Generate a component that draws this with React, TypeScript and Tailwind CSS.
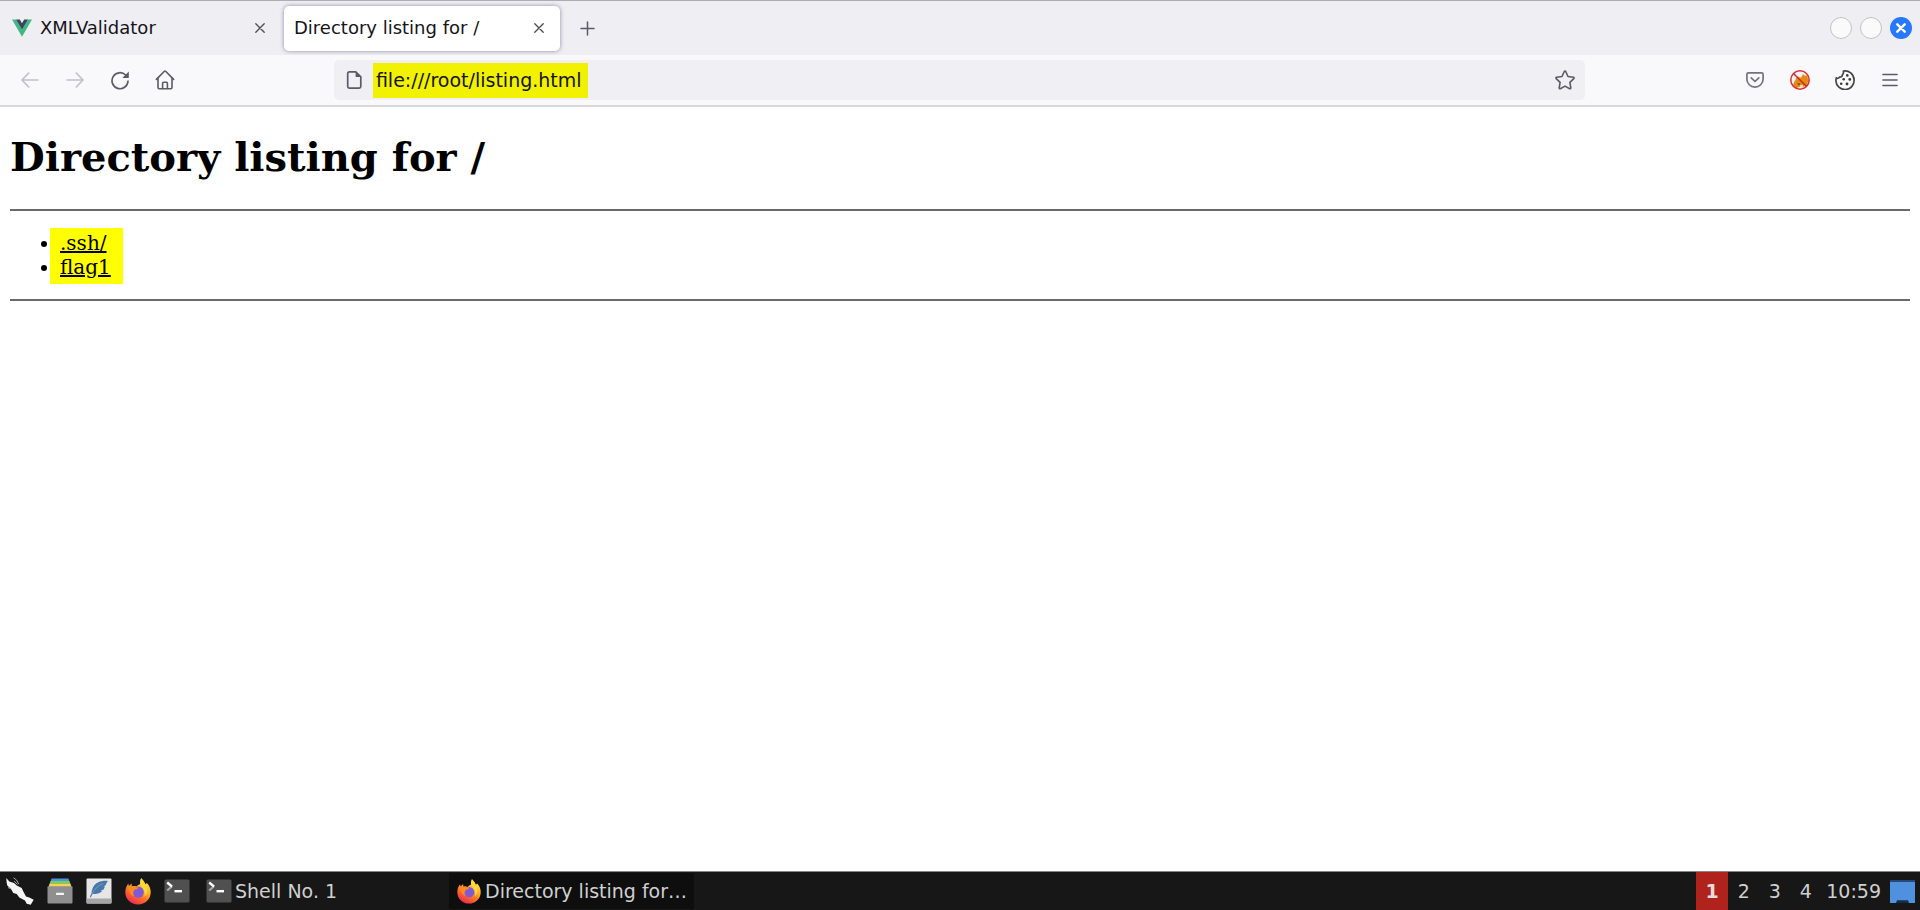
import React, { FC, ReactNode } from "react";

type IconProps = { className?: string };

const VueLogo: FC = () => (
  <svg viewBox="0 0 20 18" className="w-5 h-[18px] shrink-0">
    <path d="M0 0.5h4l6 10.2 6-10.2h4L10 17.8z" fill="#41b883" />
    <path d="M4 0.5h3.8L10 4.2l2.2-3.7H16L10 10.8z" fill="#35495e" />
  </svg>
);

const CloseIcon: FC = () => (
  <svg viewBox="0 0 10 10" className="w-[10px] h-[10px]" stroke="#4a4a52" strokeWidth="1.3" strokeLinecap="round">
    <path d="M0.8 0.8l8.4 8.4M9.2 0.8L0.8 9.2" />
  </svg>
);

const ArrowIcon: FC<IconProps> = ({ className }) => (
  <svg
    viewBox="0 0 18 16"
    className={className}
    fill="none"
    stroke="#bfbfc5"
    strokeWidth="1.6"
    strokeLinecap="round"
    strokeLinejoin="round"
  >
    <path d="M17 8H1M7.7 1L1 8l6.7 7" />
  </svg>
);

const ReloadIcon: FC = () => (
  <svg viewBox="0 0 20 20" className="w-5 h-5" fill="none" stroke="#5b5b66" strokeWidth="1.7" strokeLinecap="round">
    <path d="M18 11.2A8 8 0 1 1 15.6 5" />
    <path d="M18.8 1.4v6.2a.5.5 0 0 1-.5.5h-6z" fill="#5b5b66" stroke="none" />
  </svg>
);

const HomeIcon: FC = () => (
  <svg
    viewBox="0 0 20 20"
    className="w-5 h-5"
    fill="none"
    stroke="#5b5b66"
    strokeWidth="1.6"
    strokeLinecap="round"
    strokeLinejoin="round"
  >
    <path d="M1.4 9.4L9.4 1.3a.9.9 0 0 1 1.2 0l8 8.1" />
    <path d="M3 8v9.6a1.2 1.2 0 0 0 1.2 1.2h11.6a1.2 1.2 0 0 0 1.2-1.2V8" />
    <path d="M7.6 18.5v-5.3a1 1 0 0 1 1-1h2.8a1 1 0 0 1 1 1v5.3" />
  </svg>
);

const PageIcon: FC = () => (
  <svg viewBox="0 0 16 18" className="w-4 h-[18px]" fill="none" stroke="#5b5b66" strokeWidth="1.7" strokeLinejoin="round">
    <path d="M3.3 0.9h6.5l5 5v9.6a1.6 1.6 0 0 1-1.6 1.6H3.3a1.6 1.6 0 0 1-1.6-1.6v-13a1.6 1.6 0 0 1 1.6-1.6z" />
    <path d="M9.6 0.8v4.6a.7.7 0 0 0 .7.7h4.6z" fill="#5b5b66" stroke="none" />
  </svg>
);

const StarIcon: FC = () => (
  <svg viewBox="0 0 20 20" className="w-5 h-5" fill="none" stroke="#5b5b66" strokeWidth="1.6" strokeLinejoin="round">
    <path d="M9.3 1.5a.8.8 0 0 1 1.4 0l2.3 5 5.4.8c.7.1.9.9.4 1.3l-3.9 3.8.9 5.5c.1.7-.5 1.1-1.1.8L10 16.1l-4.7 2.6c-.6.3-1.2-.1-1.1-.8l.9-5.5-3.9-3.8c-.5-.4-.3-1.2.4-1.3l5.4-.8z" />
  </svg>
);

const PocketIcon: FC = () => (
  <svg
    viewBox="0 0 18 16"
    className="w-[18px] h-4"
    fill="none"
    stroke="#73737d"
    strokeWidth="1.7"
    strokeLinecap="round"
    strokeLinejoin="round"
  >
    <path d="M2.4 0.9h13.2a1.5 1.5 0 0 1 1.5 1.5V7A8.1 8.1 0 0 1 0.9 7V2.4a1.5 1.5 0 0 1 1.5-1.5z" />
    <path d="M5.2 5.8L9 9.5l3.8-3.7" />
  </svg>
);

// fox with a prohibition ring, proxy switcher in its off state
const FoxyIcon: FC = () => (
  <svg viewBox="0 0 20 20" className="w-5 h-5">
    <circle cx="10" cy="10" r="9.2" fill="#f4f1ef" />
    <path
      d="M3 16.2c.4-2 .8-4.400 2.400-6 .3-2 1.400-3.200 3-3.500l2.600 1 2-3.700 1.600 1.800 3-.4.2 3 1 2.200-1.400 2.400-.4 3-2.300-.2-1.600 1.800-2.600-1-2.500.9-2 .9z"
      fill="#e48a10"
    />
    <path d="M7.2 13.400l3.200.2-1.400 2z" fill="#5a4520" />
    <path d="M9.500 15.500l3-.8 1 1.800-2.500.8z" fill="#f4e3c8" />
    <circle cx="10" cy="10" r="9.2" fill="none" stroke="#dd2f2f" strokeWidth="1.5" />
    <path d="M3.5 3.5l13 13" stroke="#cc2424" strokeWidth="1.4" />
  </svg>
);

const CookieIcon: FC = () => (
  <svg viewBox="0 0 20 20" className="w-5 h-5">
    <path
      d="M8.4 1.100c5.300-1 10.600 3 10.700 8.900a9.100 9.100 0 0 1-18.200.9c0-1.200 0-2 .4-3 1 .8 2.500.5 3.100-.8 1.600.3 2.900-.7 2.900-2.200 1-.8 1.400-2.300 1.100-3.800z"
      fill="#fbfbfb"
      stroke="#454545"
      strokeWidth="1.700"
      strokeLinejoin="round"
    />
    <g fill="#3a3a3a">
      <circle cx="12.3" cy="5.400" r="1.300" />
      <circle cx="8.700" cy="9.300" r="1.300" />
      <circle cx="14.800" cy="9.400" r="1.400" />
      <circle cx="6.200" cy="13.700" r="1.300" />
      <circle cx="12" cy="14" r="1.400" />
    </g>
  </svg>
);

const MenuIcon: FC = () => (
  <svg viewBox="0 0 16 14" className="w-4 h-[14px]" stroke="#5b5b66" strokeWidth="1.6" strokeLinecap="round">
    <path d="M1 1.500h14M1 7h14M1 12.500h14" />
  </svg>
);

const KaliIcon: FC = () => (
  <svg viewBox="0 0 28 28" className="w-7 h-7">
    <path
      d="M0.300 1l3 3.400L8 6l2.700 2.500 5 2.500 1.600 3.400 2.700 5 3.300 1 4.400 2.400-3 5-4-1-1.700-3.200-5.700-3.200-2.600-3.400-3.400-1-2.300-4-3.700-3.600-.6-2.400z"
      fill="#f5f5f5"
    />
    <path d="M7.500 0.800l3 2.200 2.200 4M8.200 4.200l3.300 3.200M2 10.500l2.500 1.200" stroke="#a5a5a5" strokeWidth="1" fill="none" />
  </svg>
);

const FilesIcon: FC = () => (
  <svg viewBox="0 0 26 26" className="w-[26px] h-[26px]">
    <path d="M4.500 0.500h17l.8 2.800H3.700z" fill="#5294e2" />
    <path d="M3.500 3h19l.8 2.700H2.700z" fill="#6cd35f" />
    <path d="M2.500 5.500h21l1 3.500h-23z" fill="#f7cf5b" />
    <rect x="0.500" y="8.300" width="25" height="17.200" rx="1" fill="#8f8f8f" />
    <rect x="9" y="14.800" width="8" height="2.200" rx="0.500" fill="#f5f5f5" />
  </svg>
);

const FeatherIcon: FC = () => (
  <svg viewBox="0 0 26 26" className="w-[26px] h-[26px]">
    <rect x="0.500" y="0.500" width="25" height="25" rx="1" fill="#e6e6e6" />
    <path d="M0.500 20.500h25v4a1 1 0 0 1-1 1h-23a1 1 0 0 1-1-1z" fill="#a6a6a6" />
    <path
      d="M22 3c-6-.8-12 1.400-14.500 5.600-1.400 2.400-1.800 5-2 6.600L3.800 19l1 .4 1.800-3.600c3.600.6 7.400-.2 9.600-2.800l-1.600-.2 3-1.200 1.400-3-1.600-.1 2.200-1.300c.600-1.600 1.200-3 2.400-4.200z"
      fill="#4878a8"
    />
    <path d="M6.200 15.600C8.500 11 12 7.500 17 5.500" stroke="#86a9cc" strokeWidth="0.700" fill="none" />
  </svg>
);

const FirefoxIcon: FC<IconProps> = ({ className }) => (
  <svg viewBox="0 0 26 27" className={className}>
    <defs>
      <linearGradient id="flame" x1="0.800" y1="0.100" x2="0.300" y2="1">
        <stop offset="0" stopColor="#ffe340" />
        <stop offset="0.350" stopColor="#ffb02a" />
        <stop offset="0.650" stopColor="#ff6a26" />
        <stop offset="1" stopColor="#e8285a" />
      </linearGradient>
    </defs>
    <path
      d="M16.200 0.300c2.200 2 3.600 4 4.200 5.900l1.500-1.300c2.500 2.700 3.800 5.800 3.800 9.300 0 7-5.700 12.300-12.700 12.300S0.300 21.200 0.300 14.200c0-3.400 1.200-6.200 3-8.600l.5 2.500 3-2.600-.2 2.800c1.600-.4 3.200-.3 4.700.2 1.200-1.200 2.700-1.900 4-2.500-.4-2 .1-4 .900-5.700z"
      fill="url(#flame)"
    />
    <circle cx="13.200" cy="14.200" r="5.600" fill="#8059d6" />
    <path
      d="M3.500 8.200C6 7.600 9 8 11.500 9.200l1.800.2c-.3 1.500-1.800 2-3.300 2.200-.8.8-1.500 1.400-1.700 2.600-.2 1.700.2 3 1.200 4.200C5.800 17.500 3.200 13 3.500 8.200z"
      fill="#ff8b20"
    />
    <path d="M16.200 0.300c3 3 3.200 5.500 5.400 9 1.300 3.500.5 7-2.200 9.400.8-3 .5-6.500-2.200-9.500-2-2.400-2.800-5.200-1-8.900z" fill="#ffd83b" />
  </svg>
);

const TerminalIcon: FC = () => (
  <svg viewBox="0 0 26 24" className="w-[26px] h-6 shrink-0">
    <rect x="0.500" y="0.500" width="25" height="23" rx="1.500" fill="#505050" />
    <path d="M3.200 11.500l4.600-4" stroke="#a8a8a8" strokeWidth="2.200" />
    <path d="M3.200 3.500l4.900 4.200" stroke="#fff" strokeWidth="2.400" />
    <path d="M10.500 12.200h7.500" stroke="#fff" strokeWidth="2.400" />
  </svg>
);

const MonitorIcon: FC = () => (
  <svg viewBox="0 0 25 23" className="w-[25px] h-[23px]">
    <rect width="25" height="23" fill="#4f90df" />
    <rect width="25" height="2" fill="#264a75" />
    <path d="M6 23l1-2.700h11l1 2.700z" fill="#152c4a" />
  </svg>
);

const ToolButton: FC<{ label: string; children: ReactNode }> = ({ label, children }) => (
  <button aria-label={label} className="w-[45px] h-10 flex items-center justify-center shrink-0">
    {children}
  </button>
);

const TabBar: FC = () => (
  <div className="h-[55px] bg-[#efeef3] border-t border-[#adacb3] flex items-center text-[#15141a]">
    <div className="w-[277px] h-[45px] ml-[2px] px-[10px] flex items-center">
      <VueLogo />
      <span className="ml-2 flex-1 whitespace-nowrap">XMLValidator</span>
      <button aria-label="Close XMLValidator" className="p-1">
        <CloseIcon />
      </button>
    </div>
    <div className="w-[276px] h-[45px] ml-[5px] pl-[10px] pr-3 flex items-center bg-white rounded-[5px] shadow-[0_0_4px_rgba(100,95,130,0.7)]">
      <span className="flex-1 whitespace-nowrap">Directory listing for /</span>
      <button aria-label="Close Directory listing" className="p-1">
        <CloseIcon />
      </button>
    </div>
    <button aria-label="New tab" className="ml-5 flex">
      <svg viewBox="0 0 15 15" className="w-[15px] h-[15px]" stroke="#5b5b66" strokeWidth="1.500" strokeLinecap="round">
        <path d="M7.500 1v13M1 7.500h13" />
      </svg>
    </button>
    <div className="ml-auto mr-2 flex gap-2">
      <button
        aria-label="Minimize"
        className="w-[22px] h-[22px] rounded-full border border-[#c4c2c1] bg-[#fafafa]"
      />
      <button
        aria-label="Maximize"
        className="w-[22px] h-[22px] rounded-full border border-[#c4c2c1] bg-[#fafafa]"
      />
      <button
        aria-label="Close window"
        className="w-[22px] h-[22px] rounded-full bg-[#2777ff] flex items-center justify-center"
      >
        <svg viewBox="0 0 10 10" className="w-[10px] h-[10px]" stroke="#fff" strokeWidth="2.400" strokeLinecap="round">
          <path d="M1.300 1.300l7.400 7.400M8.700 1.300L1.300 8.700" />
        </svg>
      </button>
    </div>
  </div>
);

const NavBar: FC = () => (
  <div className="h-[52px] pl-[7px] pr-2 bg-[#f9f9fb] border-b-2 border-[#d9d9dd] flex items-center">
    <ToolButton label="Back">
      <ArrowIcon className="w-[18px] h-4" />
    </ToolButton>
    <ToolButton label="Forward">
      <ArrowIcon className="w-[18px] h-4 rotate-180" />
    </ToolButton>
    <ToolButton label="Reload">
      <ReloadIcon />
    </ToolButton>
    <ToolButton label="Home">
      <HomeIcon />
    </ToolButton>
    <div className="flex-[147]" />
    <div className="flex-[1230] h-10 pl-3 pr-[10px] bg-[#f0eff4] rounded-[5px] flex items-center">
      <PageIcon />
      <input
        aria-label="Address"
        type="text"
        defaultValue="file:///root/listing.html"
        className="w-[215px] h-[35px] ml-[11px] px-[3px] bg-[#f1f100] text-[#15141a] text-[19px] outline-none"
      />
      <button aria-label="Bookmark this page" className="ml-auto">
        <StarIcon />
      </button>
    </div>
    <div className="flex-[147]" />
    <ToolButton label="Save to Pocket">
      <PocketIcon />
    </ToolButton>
    <ToolButton label="FoxyProxy">
      <FoxyIcon />
    </ToolButton>
    <ToolButton label="Cookies">
      <CookieIcon />
    </ToolButton>
    <ToolButton label="Menu">
      <MenuIcon />
    </ToolButton>
  </div>
);

const Listing: FC = () => (
  <main className="flex-1 px-[10px] pt-[26px] bg-white text-black font-['DejaVu_Serif',serif]">
    <h1 className="text-[40px] leading-[48px] font-bold">Directory listing for /</h1>
    <hr className="mt-7 border-t-2 border-[#6a6a6a]" />
    <ul className="w-[73px] mt-[17px] ml-10 pl-[10px] pt-[3px] pb-[5px] bg-[#ffff00] list-disc text-[20px] leading-6">
      <li>
        <a href="#ssh" className="underline">
          .ssh/
        </a>
      </li>
      <li>
        <a href="#flag1" className="underline">
          flag1
        </a>
      </li>
    </ul>
    <hr className="mt-[15px] border-t-2 border-[#6a6a6a]" />
  </main>
);

const Taskbar: FC = () => (
  <footer className="h-[39px] bg-[#171717] border-t border-[#858585] flex items-center text-[#d0d0d0] text-[19px] whitespace-nowrap">
    <div className="flex items-center gap-[13px] pl-[6px]">
      <button aria-label="Applications">
        <KaliIcon />
      </button>
      <button aria-label="File manager">
        <FilesIcon />
      </button>
      <button aria-label="Text editor">
        <FeatherIcon />
      </button>
      <button aria-label="Firefox">
        <FirefoxIcon className="w-[26px] h-[27px]" />
      </button>
      <button aria-label="Terminal">
        <TerminalIcon />
      </button>
    </div>
    <button className="w-[243px] ml-4 flex items-center gap-[3px]">
      <TerminalIcon />
      Shell No. 1
    </button>
    <button className="w-[245px] h-9 pl-2 flex items-center gap-1 bg-[#0e0e0e]">
      <FirefoxIcon className="w-6 h-[25px] shrink-0" />
      Directory listing for…
    </button>
    <div className="ml-auto h-full flex items-center">
      <button className="w-8 h-full bg-[#b0231c] text-[#e6dcdc] font-bold">1</button>
      <button className="w-[31px] h-full">2</button>
      <button className="w-[31px] h-full">3</button>
      <button className="w-[31px] h-full">4</button>
      <time className="ml-[5px]">10:59</time>
      <button aria-label="Show desktop" className="ml-[9px] mr-[5px]">
        <MonitorIcon />
      </button>
    </div>
  </footer>
);

export default function App() {
  return (
    <div className="min-h-screen flex flex-col text-[18px] leading-6 font-['DejaVu_Sans',sans-serif]">
      <TabBar />
      <NavBar />
      <Listing />
      <Taskbar />
    </div>
  );
}
